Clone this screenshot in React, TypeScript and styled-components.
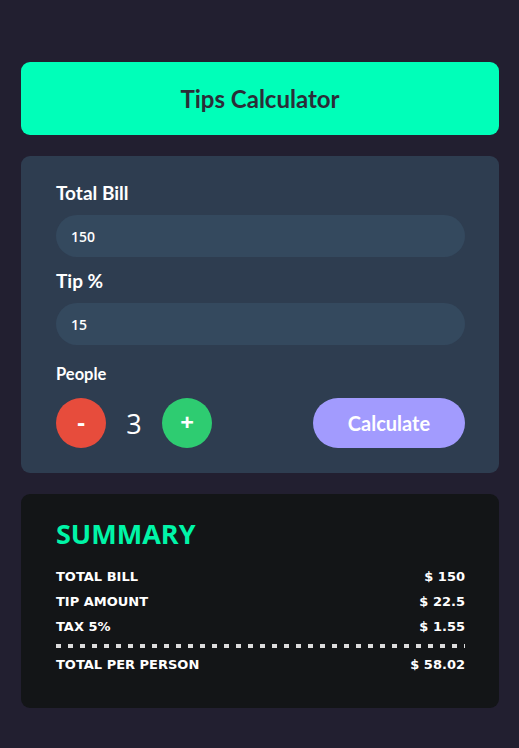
import React, {useState} from 'react';
import styled, {createGlobalStyle} from "styled-components";

const GlobalStyle = createGlobalStyle`
  * {
    box-sizing: border-box;
  }

  body {
    margin: 0;
    background: #221f30;
    font-family: Lato, "Noto Sans", sans-serif;
    color: #ffffff;
  }
`

const Page = styled.div`
  min-height: 100vh;
  padding: 62px 20px 40px 21px;
  display: flex;
  flex-direction: column;
  gap: 21px;
`

const Header = styled.div`
  height: 73px;
  border-radius: 9px;
  background: #00ffb9;
  display: flex;
  justify-content: center;
  align-items: center;

  h1 {
    margin: 0;
    font-size: 24px;
    font-weight: 700;
    color: #2b2d38;
  }
`

const Card = styled.div<{ $bg: string; $pad: string }>`
  border-radius: 9px;
  background: ${props => props.$bg};
  padding: ${props => props.$pad};
  display: flex;
  flex-direction: column;
`

const Label = styled.label<{ $size?: number; $top?: number }>`
  font-size: ${props => props.$size || 19}px;
  font-weight: 700;
  line-height: 22px;
  margin-top: ${props => props.$top || 0}px;
  margin-bottom: ${props => props.$size ? 13 : 11}px;
`

const Input = styled.input`
  width: 100%;
  height: 42px;
  border: none;
  outline: none;
  border-radius: 21px;
  background: #34495e;
  padding: 0 15px;
  margin-bottom: 13px;
  color: #ffffff;
  font-family: "Open Sans", sans-serif;
  font-size: 14px;
  font-weight: 600;
`

const Controls = styled.div`
  display: flex;
  align-items: center;
`

const RoundButton = styled.button<{ $bg: string }>`
  width: 50px;
  height: 50px;
  border-radius: 50%;
  border: none;
  background: ${props => props.$bg};
  color: #ffffff;
  font-family: "Open Sans", sans-serif;
  font-size: 24px;
  font-weight: 700;
  display: flex;
  justify-content: center;
  align-items: center;
  padding: 0 0 3px 0;
`

const Count = styled.span`
  width: 56px;
  text-align: center;
  font-family: "Open Sans", sans-serif;
  font-size: 27px;
`

const CalcButton = styled.button`
  margin-left: auto;
  width: 152px;
  height: 50px;
  border-radius: 25px;
  border: none;
  background: #a29bfe;
  color: #ffffff;
  font-family: Lato, sans-serif;
  font-size: 20px;
  font-weight: 700;
`

const SummaryTitle = styled.h2`
  margin: 0 0 11px 0;
  color: #00f5a8;
  font-family: "Open Sans", sans-serif;
  font-size: 27px;
  font-weight: 700;
  line-height: 38px;
`

const Row = styled.div`
  display: flex;
  justify-content: space-between;
  font-family: "DejaVu Sans", sans-serif;
  font-size: 13px;
  font-weight: 700;
  line-height: 25px;
`

const Divider = styled.div`
  height: 4px;
  margin: 5px 0 4px 0;
  background: repeating-linear-gradient(90deg, #dcdcdc 0 5px, transparent 5px 12px);
`

const App = () => {
    const [bill, setBill] = useState<string>("150");
    const [tip, setTip] = useState<string>("15");
    const [people, setPeople] = useState<number>(3);

    return (
        <>
            <GlobalStyle/>
            <Page>
                <Header>
                    <h1>Tips Calculator</h1>
                </Header>
                <Card $bg={"#2e3d50"} $pad={"26px 34px 25px 35px"}>
                    <Label>Total Bill</Label>
                    <Input type="text" value={bill} onChange={(e) => setBill(e.target.value)}/>
                    <Label>Tip %</Label>
                    <Input type="text" value={tip} onChange={(e) => setTip(e.target.value)}/>
                    <Label $size={16.5} $top={5}>People</Label>
                    <Controls>
                        <RoundButton $bg={"#e74c3c"} onClick={() => setPeople(Math.max(1, people - 1))}>-</RoundButton>
                        <Count>{people}</Count>
                        <RoundButton $bg={"#2ecc71"} onClick={() => setPeople(people + 1)}>+</RoundButton>
                        <CalcButton>Calculate</CalcButton>
                    </Controls>
                </Card>
                <Card $bg={"#131517"} $pad={"21px 34px 31px 35px"}>
                    <SummaryTitle>SUMMARY</SummaryTitle>
                    <Row><span>TOTAL BILL</span><span>$ 150</span></Row>
                    <Row><span>TIP AMOUNT</span><span>$ 22.5</span></Row>
                    <Row><span>TAX 5%</span><span>$ 1.55</span></Row>
                    <Divider/>
                    <Row><span>TOTAL PER PERSON</span><span>$ 58.02</span></Row>
                </Card>
            </Page>
        </>
    );
};

export default App;
